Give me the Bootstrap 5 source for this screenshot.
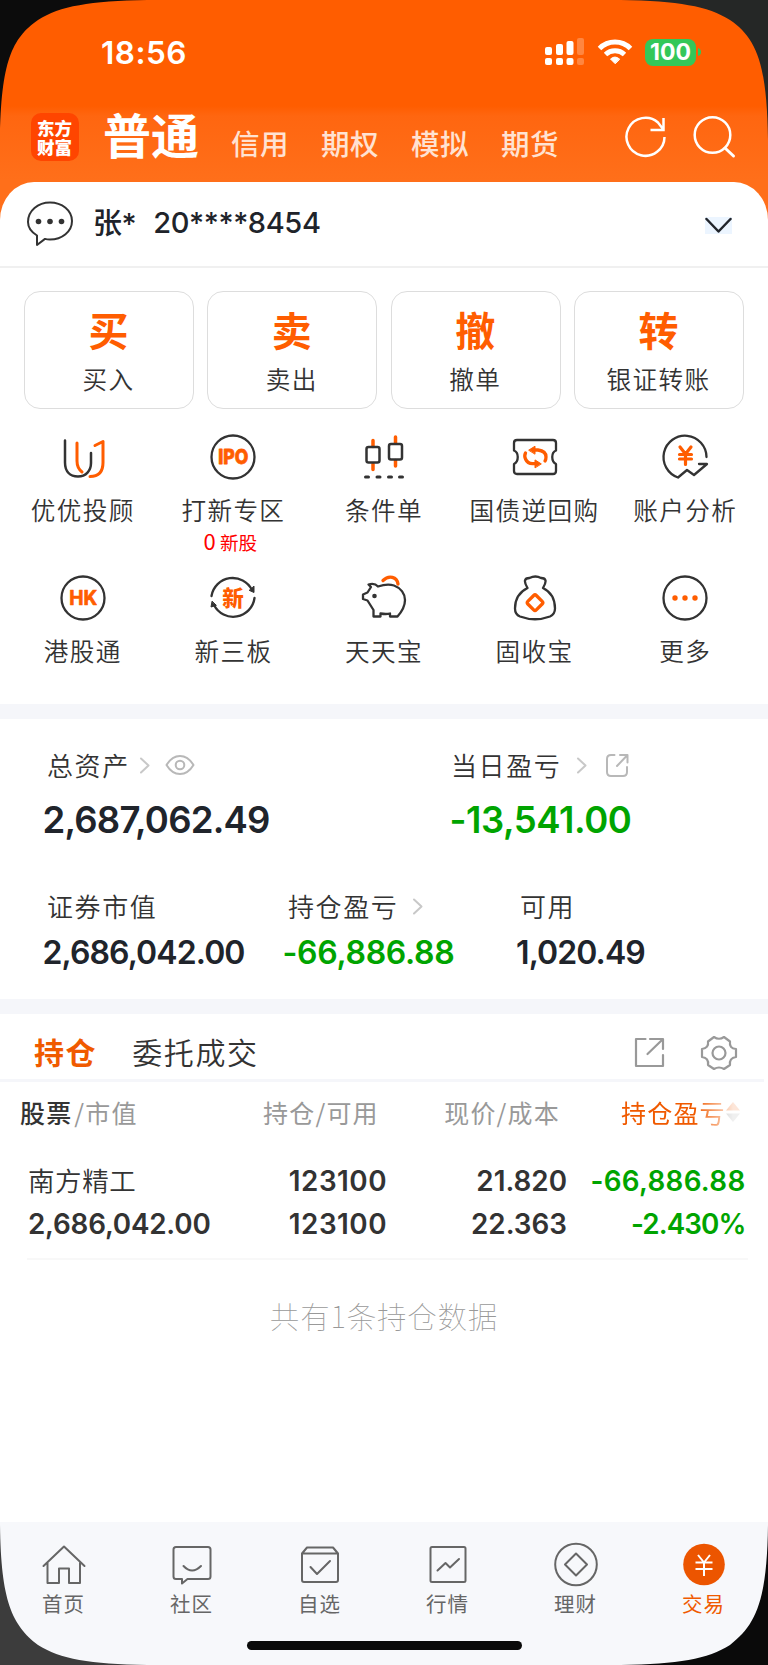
<!DOCTYPE html>
<html lang="zh-CN">
<head>
<meta charset="utf-8">
<meta name="viewport" content="width=device-width, initial-scale=1">
<title>交易</title>
<link href="https://cdn.jsdelivr.net/npm/bootstrap@5.3.0/dist/css/bootstrap.min.css" rel="stylesheet">
<style>
:root{--brand:#ff5d00;--ink:#333;--grey:#999;--fall:#00a400;--band:#f5f6fa}
html,body{margin:0;background:#fff;overflow:hidden}
body{font-family:"Inter","Noto Sans CJK SC",sans-serif;color:var(--ink);width:768px;height:1665px}
svg{display:block;flex:none;fill:none;stroke-linecap:round;stroke-linejoin:round}
.screen{width:768px;height:1665px}
.cjk{font-family:"Noto Sans CJK SC",sans-serif}
.hero{height:222px;background:linear-gradient(#ff5d00 0,#ff5d00 106px,#ff6610 116px,#ff6f1a 180px,#ff6f1a)}
.status{height:104px;padding:0 70px 0 101px}
.clock{font-size:31.5px;font-weight:600;line-height:40px;letter-spacing:.45px;margin-top:2px}
.batt{width:51px;height:27px;border-radius:8px;background:#34c759;font-size:23px;font-weight:700;line-height:27px}
.titlebar{height:78px;padding-left:31px}
.brandmark{width:48px;height:48px;border-radius:10px;background:#ff4500;font-size:17.5px;font-weight:900;line-height:19px;padding:5px 6px 0}
.mode-on{font-size:48px;font-weight:700;line-height:60px}
.mode{font-size:28.5px;font-weight:500;line-height:40px;color:#ffe2d2;letter-spacing:.5px}
.sheet{margin-top:-40px;height:86px;background:#fff;border-radius:34px 34px 0 0/38px 38px 0 0;border-bottom:2px solid #f0f0f0}
.acct{font-size:29px;line-height:40px;color:#20232a;font-weight:500;letter-spacing:-.4px}
.quick{padding:23px 24px 0;gap:13.4px}
.quick .tile{flex:1;height:118px;border:1.5px solid #ddd;border-radius:16px;padding:15px 1px 0 0}
.tile b{font-size:40px;line-height:44px;color:var(--brand);font-weight:700}
.lbl{font-size:24.6px;letter-spacing:1.4px;line-height:32px;white-space:nowrap;font-weight:350}
.tile .lbl{margin-top:11px}
.tools{padding:0 7.5px}
.tools .tool{width:20%}
.tool .lbl{margin-top:12px}
.tag-new{font-size:18.6px;line-height:24px;color:#f00;margin:3px 6px 0 0}
.tag-new i{font-style:normal;font-size:22px}
.band{height:16px;background:var(--band)}
.cap{font-size:26px;letter-spacing:1.6px;line-height:36px;white-space:nowrap;font-weight:350}
.num{font-weight:600;color:#20242b;white-space:nowrap}
.big{font-size:36.5px;line-height:44px;letter-spacing:-.8px}
.mid{font-size:32px;line-height:40px;letter-spacing:-.9px}
.num.fall,.fall{color:var(--fall)}
.num.fall{margin-left:-1.5px;letter-spacing:-.3px}
.num.big.fall{letter-spacing:-.45px}
.g2{display:grid;grid-template-columns:451px 1fr}
.g3{display:grid;grid-template-columns:284px 233px 1fr}
.tabs{height:64px;padding:0 30px 0 34px}
.tabs .t{font-size:30px;line-height:40px;letter-spacing:1.6px}
.heads,.cells{display:grid}
.heads{grid-template-columns:243px 134px 182px 1fr;font-size:25px;letter-spacing:1.2px;line-height:34px;color:var(--grey)}
.cells{grid-template-columns:200px 159px 180px 1fr;font-size:27.8px;line-height:43px;font-weight:600;padding:0 22.5px 0 28px}
.wide{letter-spacing:.5px}
.fade-end{-webkit-mask-image:linear-gradient(90deg,#000 74px,rgba(0,0,0,.15) 112px)}
.rule{height:2px;background:#f8f8f8;margin:0 20px 0 27px}
.total{font-size:29.5px;font-weight:100;line-height:40px;color:#999;letter-spacing:.8px}
.dock{height:143px;background:#f7f8fb;padding-top:19px}
.dock a{width:128px;color:#666;text-decoration:none;font-size:20.5px;letter-spacing:1px}
.dock a span{line-height:28px;margin:2px 1px 0 0}
.dock a svg{margin-right:1px}
.homebar{width:275px;height:9px;border-radius:5px;background:#0a0a0a;left:246.5px;bottom:15px}
.corner{width:150px;height:150px}
</style>
</head>
<body>
<main class="screen position-relative d-flex flex-column">
<header class="hero flex-shrink-0 text-white">
  <div class="status d-flex align-items-center">
    <span class="clock">18:56</span>
    <svg class="ms-auto" width="40" height="28"><g fill="#fff"><rect x="1" y="9" width="7" height="8" rx="2"/><rect x="12" y="6" width="7" height="11" rx="2"/><rect x="22.500" y="3" width="7" height="14" rx="2"/><rect x="1" y="20" width="7" height="7" rx="2"/><rect x="12" y="20" width="7" height="7" rx="2"/><rect x="22.500" y="20" width="7" height="7" rx="2"/><g opacity=".25"><rect x="33" y="0" width="7" height="17" rx="2"/><rect x="33" y="20" width="7" height="7" rx="2"/></g></g></svg>
    <svg style="margin-left:13px" width="36" height="26" stroke="#fff" stroke-width="5"><path stroke-linecap="butt" d="M2.500 9.500a22 22 0 0 1 31 0M8.500 15.500a14 14 0 0 1 19 0"/><path d="M18 24.500l-4.500-4.500q4.500-4 9 0z" fill="#fff" stroke="#fff" stroke-width="1"/></svg>
    <span class="batt text-center" style="margin-left:12px">100</span>
    <svg width="6" height="10" style="margin:0 -5px 0 1px"><path d="M1 1q3 1 3 4t-3 4z" fill="#34c759"/></svg>
  </div>
  <div class="titlebar d-flex cjk">
    <div class="brandmark" style="margin-top:9px">东方财富</div>
    <span class="mode-on" style="margin:-1px 0 0 24px">普通</span>
    <span class="mode" style="margin:19px 0 0 32px">信用</span>
    <span class="mode" style="margin:19px 0 0 32px">期权</span>
    <span class="mode" style="margin:19px 0 0 32px">模拟</span>
    <span class="mode" style="margin:19px 0 0 32px">期货</span>
    <svg style="margin:11px 0 0 64.500px" width="44" height="44" stroke="#fff" stroke-width="2.500"><path stroke-linecap="butt" stroke-linejoin="miter" d="M40.500 22a19 19 0 1 1-6.500-14.500L39 14M39.500 3v12h-13"/></svg>
    <svg style="margin:11px 0 0 24px" width="44" height="44" stroke="#fff" stroke-width="2.500"><circle cx="20.500" cy="20" r="17.800"/><path d="M33 33l8.500 8" stroke-width="3"/></svg>
  </div>
</header>
<section class="sheet flex-shrink-0 position-relative d-flex">
  <svg style="margin:18px 0 0 26px" width="48" height="48" stroke="#333" stroke-width="2"><path d="M11 35.500C4.500 31.500 2 27 2 22 2 10.500 12 2.500 24 2.500S46 10.500 46 21 36 39.500 24 39.500q-3 0-5-.6L11 45z"/><g fill="#333" stroke="none"><circle cx="12.500" cy="21.500" r="2.800"/><circle cx="24" cy="21.500" r="2.800"/><circle cx="35.500" cy="21.500" r="2.800"/></g></svg>
  <span class="acct" style="margin:22px 0 0 19px">张*</span><span class="acct" style="margin:21px 0 0 17px">20****8454</span>
  <svg class="ms-auto" style="margin:35px 36px 0 0" width="27" height="17" stroke="#20242b" stroke-width="2.500"><path d="M0 0h27v17H0z" fill="#ecf5ff" stroke="none"/><path d="M1.500 2l12 12.500L25.500 2"/></svg>
</section>
<section class="quick d-flex text-center cjk">
  <div class="tile d-flex flex-column"><b>买</b><span class="lbl">买入</span></div>
  <div class="tile d-flex flex-column"><b>卖</b><span class="lbl">卖出</span></div>
  <div class="tile d-flex flex-column"><b>撤</b><span class="lbl">撤单</span></div>
  <div class="tile d-flex flex-column"><b>转</b><span class="lbl">银证转账</span></div>
</section>
<section class="tools d-flex cjk" style="padding-top:24px;height:141px">
  <div class="tool d-flex flex-column align-items-center">
    <svg width="48" height="48" stroke="#333" stroke-width="2.500"><path d="M6 7.500v22c0 9 5 14 13 14s13-6 13-13.500V20"/><g stroke="#ff5d00" stroke-width="3"><path d="M18 10v18q0 7 5 11M36 12.500l8-4v21c0 9-4.500 14-13 14"/></g></svg>
    <span class="lbl">优优投顾</span></div>
  <div class="tool d-flex flex-column align-items-center">
    <svg width="48" height="48" stroke="#333" stroke-width="2.300"><circle cx="24" cy="24" r="21.500"/><text x="24.300" y="31.300" text-anchor="middle" fill="#ff5d00" stroke="#ff5d00" stroke-width=".8" font-family="Inter" font-weight="800" font-size="20" textLength="30" lengthAdjust="spacingAndGlyphs">IPO</text></svg>
    <span class="lbl">打新专区</span><span class="tag-new"><i>0</i> 新股</span></div>
  <div class="tool d-flex flex-column align-items-center">
    <svg width="48" height="48" stroke="#333" stroke-width="2.500"><path stroke="#ff5d00" stroke-width="3.500" d="M13 7.500v6M13 31v5.500M35.500 4v6M35.500 27.500v5.500"/><rect x="6.500" y="14" width="13" height="15.500" rx="2"/><rect x="29" y="11" width="13" height="15.500" rx="2"/><path stroke-width="3" d="M5.500 44h3M17 44h3M28.500 44h3M39.500 44h3"/></svg>
    <span class="lbl">条件单</span></div>
  <div class="tool d-flex flex-column align-items-center">
    <svg width="48" height="48" stroke="#333" stroke-width="2.300"><path d="M6 7h36q3 0 3 3v7.500c-5 2-5 11 0 13.500v7q0 3-3 3H6q-3 0-3-3V31c5-2.500 5-11.500 0-13.500V10q0-3 3-3z"/><g stroke="#ff5d00" stroke-width="3.300"><path d="M22 17h5q8 1 8 7 0 2.500-1 4M14.500 20q-1.500 3 0 6 2 4.700 7 4.700h5"/><path fill="#ff5d00" stroke-width="1" d="M18 17l6-3.800v7.600zM30 30.700l-6-3.800v7.600z"/></g></svg>
    <span class="lbl">国债逆回购</span></div>
  <div class="tool d-flex flex-column align-items-center">
    <svg width="48" height="48" stroke="#333" stroke-width="2.300"><path d="M45.500 24A21.500 21.500 0 1 0 17 44.500l9-7.500 7 5L46 31h-8"/><path stroke="#ff5d00" stroke-width="3.200" d="M19 14l5.500 7 5.500-7M24.500 21v10.500M18.500 21.500h12M18.500 26h12"/></svg>
    <span class="lbl">账户分析</span></div>
</section>
<section class="tools d-flex cjk" style="padding-top:24px;height:154px">
  <div class="tool d-flex flex-column align-items-center">
    <svg width="48" height="48" stroke="#333" stroke-width="2.300"><circle cx="24" cy="24" r="21.500"/><text x="24.200" y="31.300" text-anchor="middle" fill="#ff5d00" stroke="#ff5d00" stroke-width=".7" font-family="Inter" font-weight="700" font-size="20" textLength="28" lengthAdjust="spacingAndGlyphs">HK</text></svg>
    <span class="lbl">港股通</span></div>
  <div class="tool d-flex flex-column align-items-center">
    <svg width="48" height="48" stroke="#333" stroke-width="2.300"><path d="M2.500 22A21.500 21.500 0 0 1 43 16M45.500 24A21.500 21.500 0 0 1 5 31"/><path fill="#333" stroke-width="1" d="M45 12.500v6l-4.500-2zM3 27.500l-1 5.500 5-1.500z"/><text x="24" y="31.500" text-anchor="middle" fill="#ff5d00" stroke="none" font-weight="900" font-size="21.500">新</text></svg>
    <span class="lbl">新三板</span></div>
  <div class="tool d-flex flex-column align-items-center">
    <svg width="48" height="48" stroke="#333" stroke-width="2.300"><path d="M8.500 10.500q6-2 9.500 2C24 10.500 29 10 34 11.500c7 2.500 11 8.500 11 14.500q0 8-7.500 16.500h-7.500v-3q-4 1-9.500 0v3h-7V36l-6-9.500L3 25v-4.500L7.500 18.500 11 13z"/><circle cx="14.500" cy="22" r="2.300" fill="#333" stroke="none"/><path stroke="#ff5d00" stroke-width="3.300" d="M23 6.500C29 .5 37 3 38 10"/></svg>
    <span class="lbl">天天宝</span></div>
  <div class="tool d-flex flex-column align-items-center">
    <svg width="48" height="48" stroke="#333" stroke-width="2.300"><path d="M16.500 14q-6-10 2-10 6-3 11.500 0 8 0 2 10c7 3.500 12 9.500 12 20.500q0 5.500-5 8-15 5.500-30 0-5-2-5-8C4 23.500 9.500 17.500 16.500 14"/><path stroke="#ff5d00" stroke-width="3.300" d="M22.700 21.500q1.300-1.300 2.600 0l5.900 5.900q1.300 1.300 0 2.600l-5.900 5.900q-1.300 1.300-2.600 0L16.800 30q-1.300-1.300 0-2.600z"/></svg>
    <span class="lbl">固收宝</span></div>
  <div class="tool d-flex flex-column align-items-center">
    <svg width="48" height="48" stroke="#333" stroke-width="2.300"><circle cx="24" cy="24" r="21.500"/><g fill="#ff5d00" stroke="none"><circle cx="14" cy="24" r="2.700"/><circle cx="24" cy="24" r="2.700"/><circle cx="34" cy="24" r="2.700"/></g></svg>
    <span class="lbl">更多</span></div>
</section>
<div class="band flex-shrink-0" style="height:15px"></div>
<section style="height:280px">
  <div class="g2 cjk" style="padding-top:28px">
    <div class="d-flex align-items-center" style="padding-left:47px"><span class="cap">总资产</span>
      <svg width="12" height="18" style="margin-left:9px" stroke="#c8c8c8" stroke-width="2"><path d="M2 2.500l7.500 7L2 16.500"/></svg>
      <svg width="30" height="22" style="margin-left:14px" stroke="#b8b8b8" stroke-width="2"><path d="M1.500 11Q7 2 15 2t13.500 9Q23 20 15 20T1.500 11z"/><circle cx="15" cy="11" r="4.300"/></svg></div>
    <div class="d-flex align-items-center"><span class="cap">当日盈亏</span>
      <svg width="12" height="18" style="margin-left:15px" stroke="#c8c8c8" stroke-width="2"><path d="M2 2.500l7.500 7L2 16.500"/></svg>
      <svg width="24" height="24" style="margin-left:17px" stroke="#b8b8b8" stroke-width="2"><path d="M9.500 2H6Q2 2 2 6v13q0 4 4 4h12q4 0 4-4v-5M15 2h7.500v7.500M22 2.500L12 13"/></svg></div>
  </div>
  <div class="g2" style="padding-top:15px"><span class="num big" style="padding-left:42.500px">2,687,062.49</span><span class="num big fall">-13,541.00</span></div>
  <div class="g3 cjk" style="padding-top:46px">
    <span class="cap" style="padding-left:47px">证券市值</span>
    <div class="d-flex align-items-center" style="padding-left:4px"><span class="cap">持仓盈亏</span><svg width="12" height="18" style="margin-left:14px" stroke="#c8c8c8" stroke-width="2"><path d="M2 2.500l7.500 7L2 16.500"/></svg></div>
    <span class="cap" style="padding-left:3px">可用</span>
  </div>
  <div class="g3" style="padding-top:9px"><span class="num mid" style="padding-left:42.500px">2,686,042.00</span><span class="num mid fall">-66,886.88</span><span class="num mid" style="margin-left:-1px">1,020.49</span></div>
</section>
<div class="band flex-shrink-0" style="height:15px"></div>
<nav class="tabs d-flex cjk flex-shrink-0" style="height:65px">
  <span class="t fw-bold" style="color:#f05a00;margin-top:17px">持仓</span><span class="t" style="margin:17px 0 0 35px;font-weight:350">委托成交</span>
  <svg class="ms-auto" style="margin-top:22px" width="34" height="34" stroke="#999" stroke-width="2.200"><path d="M13.500 3H4v27h27V19M18 3h13v10M30.500 3.500L15.500 18"/></svg>
  <svg style="margin:20px 0 0 34px" width="38" height="38" stroke="#999" stroke-width="2.200"><path d="M8 7.500L14 3q5 3.500 10 0l6 4.500q-1 7 6 7.500v8q-7 1-6 8l-6 4q-5-3-10 0l-6-4q1-7-6-8v-8q7-1 6-7.500z"/><circle cx="19" cy="19" r="6.500"/></svg>
</nav>
<div class="flex-shrink-0" style="height:3px;width:764px;background:#f5f6fa"></div>
<section>
  <div class="heads cjk" style="padding:13px 0 0 20px"><span><span class="fw-medium" style="color:#333">股票</span> <span style="margin-left:-5px">/市值</span></span><span class="text-nowrap">持仓/可用</span><span class="text-end"><span style="margin-right:19px">现价/成本</span></span>
    <span class="d-flex align-items-center fade-end" style="margin-left:42px;color:#f05a00">持仓盈亏<svg width="16" height="22" style="margin-left:-1px"><path d="M8 1l7 8.500H1z" fill="#f05a00"/><path d="M8 21l7-8.500H1z" fill="#999"/></svg></span></div>
  <div class="cells" style="padding-top:31px">
    <span class="cjk" style="font-weight:350;font-size:26.500px;letter-spacing:.6px;margin-top:-2px;margin-bottom:2px">南方精工</span><span class="text-end wide">123100</span><span class="text-end">21.820</span><span class="text-end fall" style="letter-spacing:.3px">-66,886.88</span>
    <span style="letter-spacing:-.2px">2,686,042.00</span><span class="text-end wide">123100</span><span class="text-end">22.363</span><span class="text-end fall" style="letter-spacing:-.9px">-2.430%</span>
  </div>
  <div class="rule" style="margin-top:12px"></div>
  <div class="total text-center cjk" style="padding-top:35px">共有1条持仓数据</div>
</section>
<nav class="dock d-flex mt-auto cjk flex-shrink-0">
  <a class="d-flex flex-column align-items-center"><svg width="48" height="46" stroke="#666" stroke-width="2"><path d="M3.500 25L24 5.500 44.500 25M7.500 22v20H19V27.500h10V42h11V22"/></svg><span>首页</span></a>
  <a class="d-flex flex-column align-items-center"><svg width="48" height="46" stroke="#666" stroke-width="2"><path d="M8 6h32q2.500 0 2.500 2.500v27q0 2.500-2.500 2.500H19.500L14 42.500V38H8q-2.500 0-2.500-2.500v-27Q5.500 6 8 6zM15.500 25q8.500 9 17.500 0"/></svg><span>社区</span></a>
  <a class="d-flex flex-column align-items-center"><svg width="48" height="46" stroke="#666" stroke-width="2"><path d="M6 12.500h36V39q0 2-2 2H8q-2 0-2-2zL11 6.500h26l5 6M14.500 26l6.500 7 13-13"/></svg><span>自选</span></a>
  <a class="d-flex flex-column align-items-center"><svg width="48" height="46" stroke="#666" stroke-width="2"><rect x="6.500" y="6" width="35" height="35" rx="1.500"/><path d="M13.500 29.500l8-7.500 4.500 4.500 9-8.500"/></svg><span>行情</span></a>
  <a class="d-flex flex-column align-items-center"><svg width="48" height="46" stroke="#666" stroke-width="2"><circle cx="24" cy="23.500" r="20.800"/><path d="M24 12.500l11 11-11 11-11-11z"/></svg><span>理财</span></a>
  <a class="d-flex flex-column align-items-center" style="color:#f05a00"><svg width="48" height="46" stroke="#fff" stroke-width="2"><circle cx="24" cy="23.500" r="20.800" fill="#ec5500" stroke="none"/><path stroke-linecap="butt" d="M18 14l6 7.500 6-7.500M24 21.500V35M15.500 21.500h17M15.500 28h17"/></svg><span>交易</span></a>
</nav>
<div class="homebar position-absolute"></div>
<svg class="corner position-absolute top-0 start-0"><path fill="#0c0c0c" d="M0 0H147C90 1 60 6 38 20 12 38 1 62 0 140z"/></svg>
<svg class="corner position-absolute top-0 end-0"><path fill="#252726" d="M150 0H3C60 1 90 6 112 20 138 38 149 62 150 140z"/></svg>
<svg class="corner position-absolute bottom-0 start-0"><path fill="#3c3c3c" d="M0 150H147C90 149 60 144 38 130 12 110 1 86 0 10z"/></svg>
<svg class="corner position-absolute bottom-0 end-0"><path fill="#0a0a0a" d="M150 150H3C60 149 90 144 112 130 138 110 149 86 150 10z"/></svg>
</main>
<script src="https://cdn.jsdelivr.net/npm/bootstrap@5.3.0/dist/js/bootstrap.bundle.min.js"></script>
</body>
</html>
